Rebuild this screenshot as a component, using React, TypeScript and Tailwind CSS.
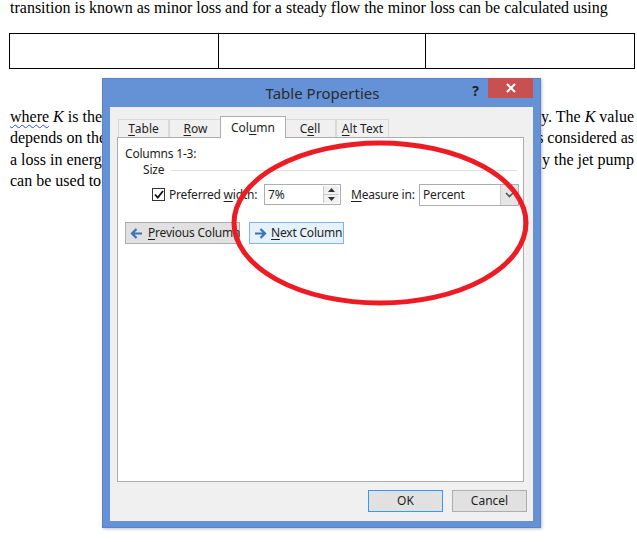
import React from 'react'

const ui = { fontFamily: '"Segoe UI", "Noto Sans", sans-serif' }
const serif = { fontFamily: '"Liberation Serif", "Times New Roman", serif' }

const Key = ({ children }: { children: React.ReactNode }) => <span className="underline underline-offset-2">{children}</span>

const Tab = ({ label, active, w }: { label: React.ReactNode; active?: boolean; w: string }) => {
    if (active) {
        return <div className={`${w} h-[22px] -mx-[2px] z-10 relative -mb-px bg-white border border-b-0 border-[#adadad] flex items-center justify-center text-[12px] text-[#1e1e1e] whitespace-nowrap`}>
            {label}
        </div>
    }
    return <div className={`${w} h-[18px] bg-[#f0f0f0] border border-b-0 border-[#d9d9d9] flex items-center justify-center text-[12px] text-[#1e1e1e] whitespace-nowrap`}>
        {label}
    </div>
}

const Arrow = ({ dir }: { dir: 'left' | 'right' }) => (
    <svg width="13" height="11" viewBox="0 0 13 11" className={`shrink-0 ${dir === 'left' ? 'rotate-180' : ''}`}>
        <path d="M1 5.5 H11 M6.5 1 L11 5.5 L6.5 10" stroke="#3b72b8" strokeWidth="2.2" fill="none" />
    </svg>
)

const Btn = ({ children, className }: { children: React.ReactNode; className: string }) => (
    <div className={`h-[22px] border flex items-center text-[12px] text-[#1e1e1e] whitespace-nowrap shrink-0 ${className}`}>{children}</div>
)

const DocLine = ({ left, right }: { left: React.ReactNode; right: React.ReactNode }) => (
    <div className="flex justify-between h-[21.5px] items-center whitespace-nowrap">
        <span>{left}</span>
        <span>{right}</span>
    </div>
)

export default function App() {
    return <div className="relative w-[637px] h-[542px] bg-white overflow-hidden text-black" style={serif}>
        {/* document page */}
        <div className="pl-[10px] pr-[3px] text-[16px]">
            <p className="h-[21px] leading-[16px] pt-0">
                transition is known as minor loss and for a steady flow the minor loss can be calculated using
            </p>
            <table className="ml-[-1px] mt-[12px] w-[626px] h-[36px] border-collapse">
                <tbody>
                    <tr>
                        <td className="border border-black w-[209px]"></td>
                        <td className="border border-black w-[207px]"></td>
                        <td className="border border-black"></td>
                    </tr>
                </tbody>
            </table>
            <div className="mt-[37px] leading-[16px]">
                <DocLine
                    left={<><span className="underline decoration-wavy decoration-[#2f4fd8] decoration-1 underline-offset-2">where</span> <i>K</i> is the loss coefficient</>}
                    right={<>for a diffuser or nozzle, mainly. The <i>K</i> value</>}
                />
                <DocLine left="depends on the geometry" right="dissipation is considered as" />
                <DocLine left="a loss in energy" right="mixing loss of y the jet pump" />
                <DocLine left="can be used to" right="" />
            </div>
        </div>

        {/* dialog window */}
        <div className="absolute left-[102px] top-[78px] w-[439px] h-[450px] bg-[#6591d6] border border-[#5a82c4] shadow-[1px_1px_3px_rgba(0,0,0,0.25)] flex flex-col" style={ui}>
            <div className="h-[28px] flex items-start relative">
                <div className="flex-1 text-center text-[15px] text-[#2b2b2b] pt-[3px] pl-[2px]">Table Properties</div>
                <div className="absolute right-[61px] top-[1px] text-[14px] font-bold text-[#222]">?</div>
                <div className="absolute right-[7px] -top-px w-[45px] h-[20px] bg-[#c75050] flex items-center justify-center">
                    <svg width="10" height="10" viewBox="0 0 10 10">
                        <path d="M1 1 L9 9 M9 1 L1 9" stroke="white" strokeWidth="2" />
                    </svg>
                </div>
            </div>
            <div className="mx-[7px] mb-[6px] flex-1 bg-[#f0f0f0] flex flex-col">
                {/* tabs */}
                <div className="flex items-end h-[30px] pl-[8px]">
                    <Tab w="w-[51px]" label={<><Key>T</Key>able</>} />
                    <Tab w="w-[53px]" label={<><Key>R</Key>ow</>} />
                    <Tab w="w-[66px]" active label={<>Col<Key>u</Key>mn</>} />
                    <Tab w="w-[52px]" label={<>C<Key>e</Key>ll</>} />
                    <Tab w="w-[53px]" label={<><Key>A</Key>lt Text</>} />
                </div>
                {/* panel */}
                <div className="ml-[7px] w-[407px] h-[345px] bg-white border border-[#adadad] text-[12px] tracking-[-0.2px] text-[#1e1e1e] whitespace-nowrap">
                    <div className="pl-[7px] pt-[8px] leading-[16px]">Columns 1-3:</div>
                    <div className="flex items-center pl-[25px] pr-[6px] h-[16px]">
                        <span>Size</span>
                        <div className="flex-1 ml-[7px] h-px bg-[#dcdcdc]"></div>
                    </div>
                    <div className="flex items-center mt-[6px] pl-[34px] h-[21px]">
                        <div className="w-[13px] h-[13px] shrink-0 border border-[#333] bg-white flex items-center justify-center">
                            <svg width="10" height="9" viewBox="0 0 10 9">
                                <path d="M1 4.5 L3.8 7.5 L9 1" stroke="#111" strokeWidth="1.8" fill="none" />
                            </svg>
                        </div>
                        <span className="ml-[4px] w-[95px] shrink-0">Preferred <Key>w</Key>idth:</span>
                        <div className="w-[77px] h-[21px] shrink-0 border border-[#abadb3] bg-white flex">
                            <span className="flex-1 pl-[3px] leading-[19px]">7%</span>
                            <div className="w-[16px] border-l border-[#c9c9c9] flex flex-col my-[1px] mr-[1px] bg-[#f0f0f0]">
                                <div className="flex-1 flex items-center justify-center border-b border-[#c9c9c9]">
                                    <svg width="7" height="4" viewBox="0 0 7 4"><path d="M0 4 L3.5 0 L7 4Z" fill="#333" /></svg>
                                </div>
                                <div className="flex-1 flex items-center justify-center">
                                    <svg width="7" height="4" viewBox="0 0 7 4"><path d="M0 0 L3.5 4 L7 0Z" fill="#333" /></svg>
                                </div>
                            </div>
                        </div>
                        <span className="ml-[10px] w-[68px] shrink-0"><Key>M</Key>easure in:</span>
                        <div className="w-[100px] h-[22px] shrink-0 border border-[#abadb3] bg-white flex">
                            <span className="flex-1 pl-[3px] leading-[20px]">Percent</span>
                            <div className="w-[18px] bg-[#e5e5e5] border-l border-[#c9c9c9] flex items-center justify-center">
                                <svg width="9" height="6" viewBox="0 0 9 6"><path d="M1 1 L4.5 4.5 L8 1" stroke="#555" strokeWidth="1.6" fill="none" /></svg>
                            </div>
                        </div>
                    </div>
                    <div className="flex items-center mt-[17px] pl-[7px] gap-[9px]">
                        <Btn className="w-[115px] bg-[#e1e1e1] border-[#adadad] pl-[4px] gap-[5px]">
                            <Arrow dir="left" />
                            <span><Key>P</Key>revious Column</span>
                        </Btn>
                        <Btn className="w-[95px] bg-[#e5f1fb] border-[#7eb4ea] pl-[4px] gap-[4px]">
                            <Arrow dir="right" />
                            <span><Key>N</Key>ext Column</span>
                        </Btn>
                    </div>
                </div>
                {/* footer buttons */}
                <div className="flex justify-end gap-[9px] mt-[8px] pr-[6px]">
                    <Btn className="w-[75px] justify-center bg-[#e1e1e1] border-[#3399ff]">OK</Btn>
                    <Btn className="w-[75px] justify-center bg-[#e1e1e1] border-[#adadad]">Cancel</Btn>
                </div>
            </div>
        </div>

        {/* red annotation ellipse */}
        <svg className="absolute left-0 top-0 pointer-events-none" width="637" height="542">
            <ellipse cx="380" cy="223" rx="146" ry="80" fill="none" stroke="#ed1c24" strokeWidth="5" />
        </svg>
    </div>
}
